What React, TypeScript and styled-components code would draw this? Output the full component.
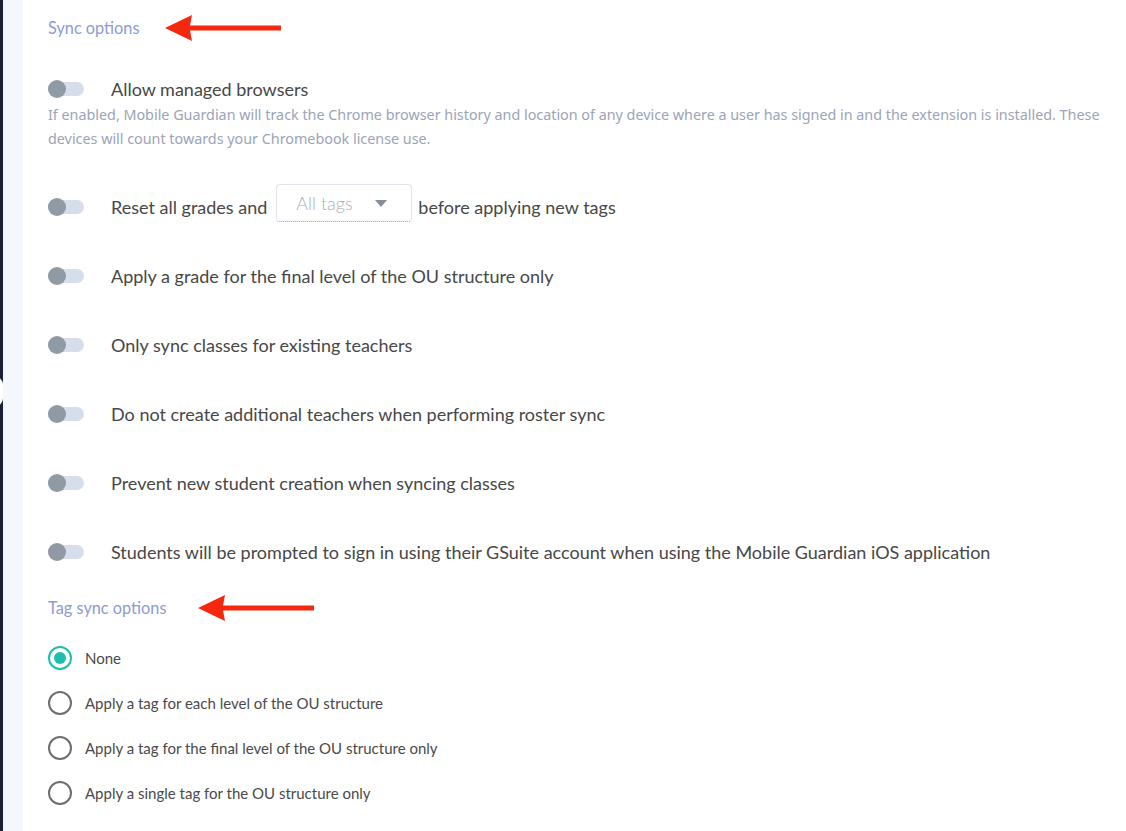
import React from "react";
import styled, { createGlobalStyle } from "styled-components";

const Global = createGlobalStyle`
  html, body { margin: 0; padding: 0; background: #ffffff; }
  body { font-family: Lato, "Open Sans", sans-serif; }
`;

const Page = styled.div`
  display: flex;
  min-height: 831px;
  width: 1126px;
  overflow: hidden;
`;

const Sidebar = styled.div`
  position: relative;
  width: 3px;
  flex: none;
  background: #1a2036;
`;

const SidebarNotch = styled.div`
  position: absolute;
  left: -12px;
  top: 377px;
  width: 15px;
  height: 29px;
  border-radius: 8px;
  background: #ffffff;
`;

const Gutter = styled.div`
  width: 20px;
  flex: none;
  background: #f4f8fc;
`;

const Main = styled.main`
  flex: 1;
  padding: 18px 20px 20px 25px;
  display: flex;
  flex-direction: column;
`;

const TitleRow = styled.div<{ $top: number; $gap: number }>`
  display: flex;
  align-items: center;
  gap: ${(p) => p.$gap}px;
  margin-top: ${(p) => p.$top}px;
  height: 20px;
`;

const SectionTitle = styled.h3`
  margin: 0;
  font-family: Lato, sans-serif;
  font-weight: 400;
  font-size: 16.3px;
  line-height: 20px;
  color: #8d9bd3;
`;

const ToggleList = styled.div`
  display: flex;
  flex-direction: column;
  gap: 31px;
  margin-top: 37px;
`;

const ToggleRow = styled.div<{ $h?: number }>`
  display: flex;
  align-items: center;
  height: ${(p) => p.$h ?? 38}px;
  gap: 27px;
`;

const Switch = styled.span`
  position: relative;
  flex: none;
  width: 36px;
  height: 14px;
  border-radius: 7px;
  background: #d7deeb;
  &::before {
    content: "";
    position: absolute;
    left: 0;
    top: -2px;
    width: 18px;
    height: 18px;
    border-radius: 50%;
    background: #8f9aa5;
  }
`;

const Label = styled.span`
  display: flex;
  align-items: center;
  font-family: Lato, sans-serif;
  font-size: 18px;
  color: #474747;
  white-space: nowrap;
`;

const Description = styled.p`
  margin: 2px 0 0;
  font-family: "Noto Sans", sans-serif;
  font-size: 14.33px;
  line-height: 24px;
  color: #9ba4b8;
  max-width: 1065px;
`;

const Select = styled.div`
  display: flex;
  align-items: center;
  justify-content: space-between;
  box-sizing: border-box;
  width: 136px;
  height: 38px;
  margin: -8px 6px 0 9px;
  padding: 0 24px 0 19px;
  border: 1px solid #dfe4ee;
  border-bottom: 1px dotted #9aa0aa;
  border-radius: 4px;
  font-size: 18px;
  font-weight: 300;
  color: #a9afba;
`;

const Caret = styled.span`
  width: 0;
  height: 0;
  border-left: 6.5px solid transparent;
  border-right: 6.5px solid transparent;
  border-top: 7px solid #878d96;
`;

const RadioList = styled.div`
  display: flex;
  flex-direction: column;
  gap: 21px;
  margin-top: 28px;
`;

const RadioRow = styled.label`
  display: flex;
  align-items: center;
  gap: 13px;
  height: 24px;
  font-family: Lato, sans-serif;
  font-size: 15px;
  color: #4a4a4a;
`;

const Radio = styled.span<{ $checked?: boolean }>`
  box-sizing: border-box;
  flex: none;
  width: 24px;
  height: 24px;
  border-radius: 50%;
  border: 2px solid ${(p) => (p.$checked ? "#1dbfb1" : "#6e6e6e")};
  display: flex;
  align-items: center;
  justify-content: center;
  &::after {
    content: "";
    display: ${(p) => (p.$checked ? "block" : "none")};
    width: 12px;
    height: 12px;
    border-radius: 50%;
    background: #1dbfb1;
  }
`;

const Arrow = () => (
  <svg width="116" height="26" viewBox="0 0 116 26">
    <path d="M0 13 L27 0 L25 10.5 L116 10.5 L116 15.5 L25 15.5 L27 26 Z" fill="#f5270f" />
  </svg>
);

const toggles = [
  "Apply a grade for the final level of the OU structure only",
  "Only sync classes for existing teachers",
  "Do not create additional teachers when performing roster sync",
  "Prevent new student creation when syncing classes",
  "Students will be prompted to sign in using their GSuite account when using the Mobile Guardian iOS application",
];

const radios = [
  "None",
  "Apply a tag for each level of the OU structure",
  "Apply a tag for the final level of the OU structure only",
  "Apply a single tag for the OU structure only",
];

export default function App() {
  return (
    <Page>
      <Global />
      <Sidebar>
        <SidebarNotch />
      </Sidebar>
      <Gutter />
      <Main>
        <TitleRow $top={0} $gap={26}>
          <SectionTitle>Sync options</SectionTitle>
          <Arrow />
        </TitleRow>
        <ToggleRow $h={24} style={{ marginTop: 39 }}>
          <Switch />
          <Label>Allow managed browsers</Label>
        </ToggleRow>
        <Description>
          If enabled, Mobile Guardian will track the Chrome browser history and location of any device where a user
          has signed in and the extension is installed. These devices will count towards your Chromebook license use.
        </Description>
        <ToggleList>
          <ToggleRow>
            <Switch />
            <Label>
              Reset all grades and
              <Select>
                All tags
                <Caret />
              </Select>
              before applying new tags
            </Label>
          </ToggleRow>
          {toggles.map((t) => (
            <ToggleRow key={t}>
              <Switch />
              <Label>{t}</Label>
            </ToggleRow>
          ))}
        </ToggleList>
        <TitleRow $top={27} $gap={32}>
          <SectionTitle>Tag sync options</SectionTitle>
          <Arrow />
        </TitleRow>
        <RadioList>
          {radios.map((r, i) => (
            <RadioRow key={r}>
              <Radio $checked={i === 0} />
              {r}
            </RadioRow>
          ))}
        </RadioList>
      </Main>
    </Page>
  );
}
